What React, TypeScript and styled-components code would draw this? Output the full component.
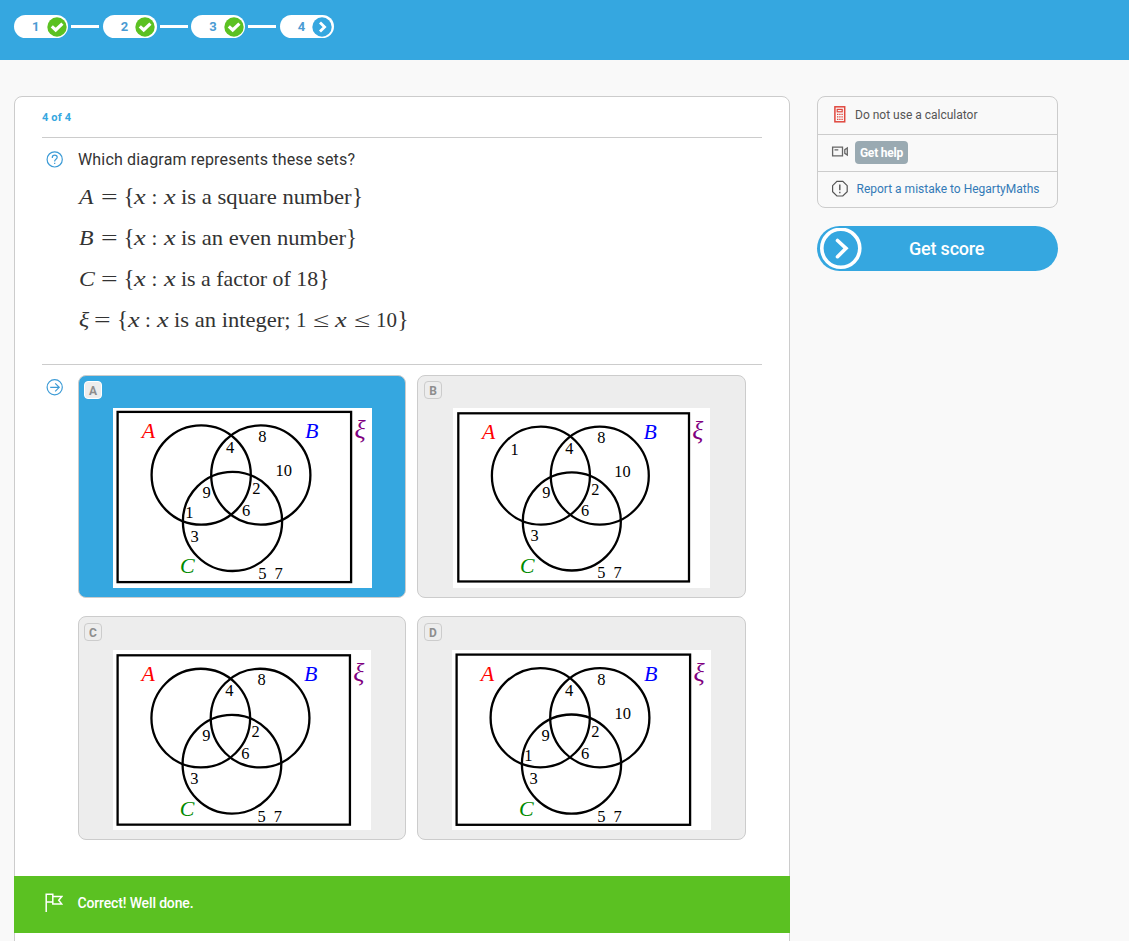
import React from "react";
import styled, { createGlobalStyle } from "styled-components";

const BLUE = "#35a7e0";
const GREEN = "#5bc122";
const LINE = "#cccccc";

const GlobalStyle = createGlobalStyle`
  * { box-sizing: border-box; }
  html, body { margin: 0; height: 100%; }
  body { background: #f9f9f9; font-family: Roboto, "Liberation Sans", sans-serif; color: #333; overflow: hidden; }
`;

const Page = styled.div`
  height: 941px;
  overflow: hidden;
  display: flex;
  flex-direction: column;
`;

const Header = styled.header`
  flex: none;
  height: 60px;
  padding: 15px 14px 0;
  background: ${BLUE};
  display: flex;
  align-items: flex-start;
`;

const Step = styled.div`
  width: 54px;
  height: 23px;
  border-radius: 12px;
  background: #fff;
  display: flex;
  align-items: center;
  justify-content: flex-end;
  gap: 7px;
  padding-right: 1.5px;
  color: #4a9bd3;
  font-size: 13px;
  line-height: 21px;
  padding-bottom: 1px;
  font-weight: 700;
  svg { position: relative; top: 0.5px; }
`;

const StepLink = styled.div`
  width: 28px;
  height: 3px;
  margin: 10px 3.6px 0 3px;
  background: #fff;
`;

const Content = styled.main`
  display: flex;
  align-items: flex-start;
  gap: 27px;
  padding: 36px 0 0 14px;
`;

const QuizPanel = styled.section`
  width: 776px;
  height: 880px;
  border: 1px solid ${LINE};
  border-radius: 8px;
  background: #fff;
  display: flex;
  flex-direction: column;
`;

const Progress = styled.div`
  height: 41px;
  margin: 0 27px;
  padding-top: 14px;
  border-bottom: 1px solid ${LINE};
  color: ${BLUE};
  font-size: 11px;
  line-height: 13px;
  font-weight: 700;
  letter-spacing: 0.15px;
`;

const Row = styled.div<{ $height: number; $line?: boolean }>`
  height: ${(p) => p.$height}px;
  margin: 0 27px;
  display: flex;
  border-bottom: ${(p) => (p.$line ? `1px solid ${LINE}` : "none")};
`;

const IconCell = styled.div`
  flex: none;
  width: 36px;
  padding: 13px 0 0 4px;
  svg { display: block; }
`;

const Prompt = styled.p`
  margin: 12px 0 15px;
  font-size: 16px;
  line-height: 20px;
  letter-spacing: 0.17px;
`;

const Formula = styled.div`
  display: flex;
  height: 41px;
  padding-left: 1px;
  line-height: 24px;
  font-family: "Liberation Serif", serif;
  font-size: 21px;
  white-space: pre;
`;

const Token = styled.span<{ $w: number; $size?: number; $stretch?: number }>`
  display: block;
  flex: none;
  width: ${(p) => p.$w}px;
  font-size: ${(p) => p.$size ?? 21}px;
  transform: scaleX(${(p) => p.$stretch ?? 1});
  transform-origin: left;
`;

const Variable = styled(Token)`
  font-style: italic;
`;

const Answers = styled.div`
  display: grid;
  grid-template-columns: 328px 329px;
  grid-template-rows: 223px 224px;
  gap: 18px 11px;
  padding-top: 10px;
`;

const Answer = styled.div<{ $selected?: boolean; $top: number; $inset: number }>`
  border: 1px solid ${LINE};
  border-radius: 8px;
  background: ${(p) => (p.$selected ? BLUE : "#ededed")};
  padding: ${(p) => p.$top}px 0 0 ${(p) => p.$inset}px;
`;

const Badge = styled.div<{ $selected?: boolean }>`
  width: 18px;
  height: 18px;
  border: 1px solid ${(p) => (p.$selected ? "#fff" : LINE)};
  border-radius: 4px;
  background: #ededed;
  color: #8e8e8e;
  font-size: 12px;
  line-height: 18px;
  font-weight: 700;
  text-align: center;
`;

const Diagram = styled.svg<{ $left: number }>`
  display: block;
  margin: 9px 0 0 ${(p) => p.$left}px;
  background: #fff;
  font-family: "Liberation Serif", serif;
`;

const Feedback = styled.div`
  flex: none;
  height: 57px;
  margin: auto -1px 42px;
  padding: 0 0 3px 31px;
  display: flex;
  align-items: center;
  gap: 14.5px;
  background: ${GREEN};
  color: #fff;
  font-size: 14px;
  font-weight: 500;
  letter-spacing: -0.15px;
`;

const Sidebar = styled.aside`
  width: 241px;
  display: flex;
  flex-direction: column;
  gap: 18px;
`;

const Tools = styled.div`
  border: 1px solid ${LINE};
  border-radius: 8px;
  height: 112px;
  font-size: 12px;
`;

const Tool = styled.div<{ $h: number; $gap: number; $link?: boolean }>`
  height: ${(p) => p.$h}px;
  display: flex;
  align-items: center;
  gap: ${(p) => p.$gap}px;
  padding: 0 0 2px 13px;
  color: ${(p) => (p.$link ? "#337ab7" : "#555")};
  border-bottom: 1px solid ${LINE};
  &:last-child { border-bottom: 0; }
`;

const HelpButton = styled.span`
  width: 53px;
  height: 23px;
  border-radius: 4px;
  background: #9aaab2;
  color: #fff;
  font-weight: 700;
  line-height: 24px;
  text-align: center;
  letter-spacing: -0.2px;
`;

const ScoreButton = styled.div`
  height: 45px;
  border-radius: 23px;
  background: ${BLUE};
  color: #fff;
  display: flex;
  align-items: center;
  padding-left: 3px;
  font-size: 18px;
  font-weight: 500;
  letter-spacing: -0.2px;
`;

const ScoreLabel = styled.span`
  margin-left: 47px;
`;

const StepMark = ({ done }: { done: boolean }) => (
  <svg width="20" height="20" viewBox="0 0 20 20" fill="none">
    <circle cx="10" cy="10" r="9.7" fill={done ? GREEN : BLUE} />
    {done ? (
      <path d="M4.8 9.4 8.7 13 15.4 6.6" stroke="#fff" strokeWidth="3.2" />
    ) : (
      <path d="M8 5.4 12.6 10 8 14.6" stroke="#fff" strokeWidth="2.8" />
    )}
  </svg>
);

const steps = [1, 2, 3, 4];

type Mark = [string, number, number];

const commonMarks: Mark[] = [
  ["8", 149.3, 34],
  ["4", 117, 45],
  ["9", 93.7, 90],
  ["2", 143.3, 86.3],
  ["6", 133, 108],
  ["3", 81.7, 133.5],
  ["5", 149.3, 171],
  ["7", 165.7, 171],
];
const ten: Mark = ["10", 170.8, 68];
const lowerOne: Mark = ["1", 76.3, 110];
const upperOne: Mark = ["1", 61.5, 46];

interface VennProps {
  width: number;
  left: number;
  x: number;
  y: number;
  scale: number;
  extra: Mark[];
}

const Venn = ({ width, left, x, y, scale, extra }: VennProps) => (
  <Diagram $left={left} width={width} height="180" viewBox={`0 0 ${width} 180`}>
    <g transform={`translate(${x} ${y}) scale(${scale})`}>
      <g fill="none" stroke="#000" strokeWidth="2.3">
        <rect x="-0.4" y="-0.4" width="233.5" height="170.2" />
        <circle cx="83.2" cy="62.7" r="49.6" />
        <circle cx="142.8" cy="62.7" r="49.6" />
        <circle cx="114.5" cy="109.1" r="49.6" />
      </g>
      <g transform="translate(-5 -4.3)">
        <g fontSize="16.5" textAnchor="middle" fill="#000">
          {[...commonMarks, ...extra].map(([value, cx, cy]) => (
            <text key={value} x={cx} y={cy}>{value}</text>
          ))}
        </g>
        <g fontSize="22" fontStyle="italic">
          <text x="28.7" y="30" fill="#f00">A</text>
          <text x="192" y="30" fill="#00f">B</text>
          <text x="67" y="165.3" fill="#008a00">C</text>
          <text x="241.5" y="30" fontSize="26" fill="#800080">ξ</text>
        </g>
      </g>
    </g>
  </Diagram>
);

interface LineProps {
  name: string;
  nameWidth: number;
  words: string;
  wordsWidth: number;
  stretch: number;
  children?: React.ReactNode;
}

const SetLine = ({ name, nameWidth, words, wordsWidth, stretch, children }: LineProps) => (
  <Formula>
    <Variable $w={nameWidth} $size={22} $stretch={1.08}>{name}</Variable>
    <Token $w={23} $stretch={1.4}>=</Token>
    <Token $w={10.5} $size={23}>{"{"}</Token>
    <Variable $w={17.5} $stretch={1.25}>x</Variable>
    <Token $w={12}>:</Token>
    <Variable $w={17} $stretch={1.25}>x</Variable>
    <Token $w={wordsWidth} $stretch={stretch}>{words}</Token>
    {children}
    <Token $w={11} $size={23}>{"}"}</Token>
  </Formula>
);

export default function App() {
  return (
    <Page>
      <GlobalStyle />
      <Header>
        {steps.map((n) => (
          <React.Fragment key={n}>
            {n > 1 && <StepLink />}
            <Step>
              {n}
              <StepMark done={n < 4} />
            </Step>
          </React.Fragment>
        ))}
      </Header>
      <Content>
        <QuizPanel>
          <Progress>4 of 4</Progress>
          <Row $height={227} $line>
            <IconCell>
              <svg width="18" height="18" viewBox="0 0 18 18" fill="none" stroke="#3c9bd6" strokeWidth="1.2">
                <circle cx="8.7" cy="8.4" r="7.6" />
                <path d="M6.3 7V6.4C6.3 5 7.2 4.2 8.7 4.2s2.5.9 2.5 2.1c0 1.8-2.5 2-2.5 3.8v.5" />
                <path d="M8.7 11.7v1.3" />
              </svg>
            </IconCell>
            <div>
              <Prompt>Which diagram represents these sets?</Prompt>
              <SetLine name="A" nameWidth={21.5} words="is a square number" wordsWidth={171.5} stretch={1.08} />
              <SetLine name="B" nameWidth={21.5} words="is an even number" wordsWidth={165.5} stretch={1.076} />
              <SetLine name="C" nameWidth={21.5} words="is a factor of 18" wordsWidth={138} stretch={1.04} />
              <SetLine name="ξ" nameWidth={15} words="is an integer;" wordsWidth={122} stretch={1.075}>
                <Token $w={17}>1</Token>
                <Token $w={22} $stretch={1.4}>≤</Token>
                <Variable $w={19} $stretch={1.25}>x</Variable>
                <Token $w={22} $stretch={1.4}>≤</Token>
                <Token $w={21.5}>10</Token>
              </SetLine>
            </div>
          </Row>
          <Row $height={490}>
            <IconCell>
              <svg width="18" height="18" viewBox="0 0 18 18" fill="none" stroke="#3c9bd6" strokeWidth="1.2">
                <circle cx="8.7" cy="9.3" r="7.6" />
                <path d="M4.2 9.3h8.9M9.2 5.3l4 4-4 4" />
              </svg>
            </IconCell>
            <Answers>
              <Answer $selected $top={5} $inset={5}>
                <Badge $selected>A</Badge>
                <Venn width={259} left={29} x={5} y={4.3} scale={1} extra={[ten, lowerOne]} />
              </Answer>
              <Answer $top={5} $inset={6}>
                <Badge>B</Badge>
                <Venn width={257} left={29} x={5.7} y={5.7} scale={0.988} extra={[ten, upperOne]} />
              </Answer>
              <Answer $top={6} $inset={5}>
                <Badge>C</Badge>
                <Venn width={258} left={29} x={5} y={5.7} scale={0.995} extra={[]} />
              </Answer>
              <Answer $top={6} $inset={6}>
                <Badge>D</Badge>
                <Venn width={259} left={28} x={5} y={5} scale={1} extra={[ten, lowerOne]} />
              </Answer>
            </Answers>
          </Row>
          <Feedback>
            <svg width="18" height="20" viewBox="0 0 18 20" fill="none" stroke="#fff" strokeWidth="1.5">
              <path d="M1.2 19V1.3h6.6v7.6H1.2M7.8 3.5h9l-3.1 3.8 3.1 3.8H7.8V8.5" />
            </svg>
            Correct! Well done.
          </Feedback>
        </QuizPanel>
        <Sidebar>
          <Tools>
            <Tool $h={38} $gap={6}>
              <svg width="18" height="18" viewBox="0 0 18 18" fill="none" stroke="#e0483e">
                <rect x="3.9" y="0.8" width="9.8" height="15" strokeWidth="1.5" />
                <rect x="6.2" y="3.4" width="5" height="2.4" strokeWidth="1.2" />
                <path d="M6 8.3h6M6 10.8h6M6 13.3h6" strokeWidth="1.2" strokeDasharray="1.4 0.8" />
              </svg>
              Do not use a calculator
            </Tool>
            <Tool $h={37} $gap={6}>
              <svg width="18" height="18" viewBox="0 0 18 18" fill="none" stroke="#666" strokeWidth="1.3">
                <path d="M1.6 4.2h9.9v8.6H1.6zM3.5 6.9h3.8M16.3 5v7l-2.5-1.6V6.6z" />
              </svg>
              <HelpButton>Get help</HelpButton>
            </Tool>
            <Tool $h={36} $gap={7.5} $link>
              <svg width="18" height="18" viewBox="0 0 18 18" fill="none" stroke="#555" strokeWidth="1.2">
                <path d="M5.9 1.3h5.9l4.4 4.4v6L11.8 16H5.9l-4.3-4.3v-6z" />
                <path d="M8.8 4.6v5.7M8.8 11.8v1.5" strokeWidth="1.4" />
              </svg>
              Report a mistake to HegartyMaths
            </Tool>
          </Tools>
          <ScoreButton>
            <svg width="42" height="42" viewBox="0 0 42 42" fill="none" stroke="#fff">
              <circle cx="20.8" cy="20.3" r="19" strokeWidth="3.6" />
              <path d="M17.5 12.5 26 20.4 17.5 28.7" strokeWidth="3.6" strokeLinecap="round" />
            </svg>
            <ScoreLabel>Get score</ScoreLabel>
          </ScoreButton>
        </Sidebar>
      </Content>
    </Page>
  );
}
